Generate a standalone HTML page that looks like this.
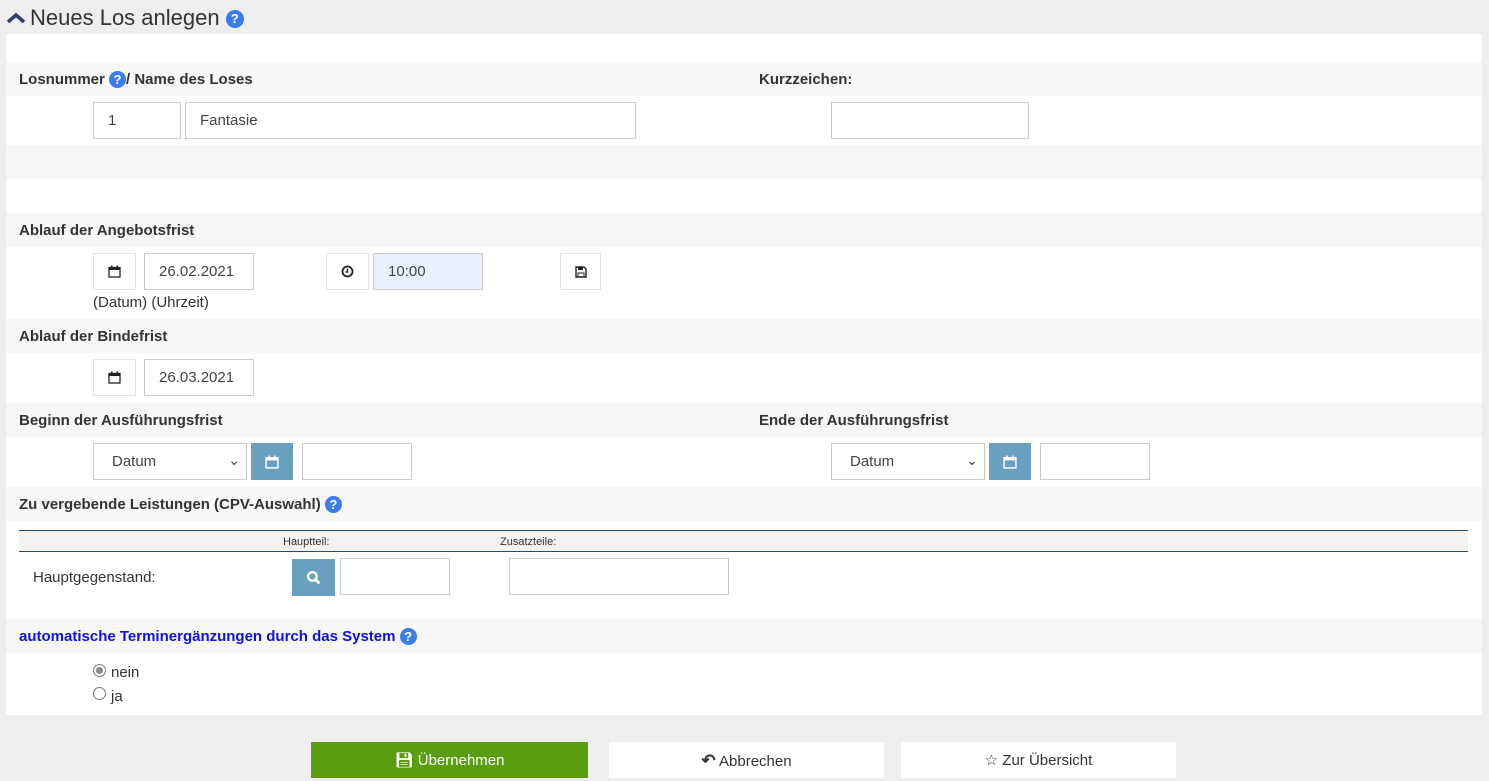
<!DOCTYPE html>
<html><head><meta charset="utf-8"><style>
body{margin:0;width:1489px;height:781px;background:#eee;font-family:"Liberation Sans",sans-serif;font-size:15px;color:#333;position:relative;overflow:hidden}
.a{position:absolute}
.row{position:absolute;left:6px;width:1476px;height:34px;background:#f7f7f7}
.lbl{position:absolute;font-weight:bold;font-size:15px;color:#333;line-height:18px}
.in{position:absolute;box-sizing:border-box;border:1px solid #ccc;background:#fff;height:37px;padding-left:14px;line-height:36px;font-size:15px;color:#444}
.ib{position:absolute;box-sizing:border-box;border:1px solid #e3e3e3;background:#fff;width:43px;height:37px;display:flex;align-items:center;justify-content:center}
.q{display:inline-block;width:17px;height:17px;border-radius:50%;background:#3a7bf0;color:#fff;font-weight:bold;font-size:13px;text-align:center;line-height:17px;vertical-align:top}
.sel{position:absolute;box-sizing:border-box;border:1px solid #ccc;background:#fff;height:37px;width:154px;padding-left:18px;line-height:36px;color:#444}
.bb{position:absolute;background:#6aa0bf;width:42px;height:37px;display:flex;align-items:center;justify-content:center}
.btn{position:absolute;top:742px;height:36px;line-height:37px;text-align:center;font-size:15px;background:#fff;color:#333}
</style></head><body>
<svg class="a" style="left:6px;top:11px" width="20" height="14" viewBox="0 0 20 14"><path d="M2 11 L10 4 L18 11" stroke="#2e3f66" stroke-width="3.5" fill="none"/></svg>
<div class="a" style="left:30px;top:6px;font-size:22px;color:#333;line-height:24px">Neues Los anlegen <span class="q" style="width:18px;height:18px;line-height:18px;vertical-align:middle">?</span></div>
<div class="a" style="left:6px;top:34px;width:1476px;height:681px;background:#fff"></div>
<div class="row" style="top:62px"></div>
<div class="row" style="top:145px"></div>
<div class="row" style="top:213px"></div>
<div class="row" style="top:319px"></div>
<div class="row" style="top:403px"></div>
<div class="row" style="top:487px"></div>
<div class="row" style="top:619px"></div>

<div class="lbl" style="left:19px;top:71px">Losnummer <span class="q">?</span>/ Name des Loses</div>
<div class="lbl" style="left:759px;top:71px">Kurzzeichen:</div>
<div class="in" style="left:93px;top:102px;width:88px">1</div>
<div class="in" style="left:185px;top:102px;width:451px">Fantasie</div>
<div class="in" style="left:831px;top:102px;width:198px"></div>

<div class="lbl" style="left:19px;top:222px">Ablauf der Angebotsfrist</div>
<div class="ib" style="left:93px;top:253px"><svg width="13" height="13" viewBox="0 0 13 13"><rect x="1" y="2.5" width="11" height="9.5" fill="none" stroke="#222" stroke-width="1.3"/><rect x="1" y="2.5" width="11" height="2.5" fill="#222"/><rect x="3" y="0.5" width="1.5" height="3" fill="#222"/><rect x="8.5" y="0.5" width="1.5" height="3" fill="#222"/></svg></div>
<div class="in" style="left:144px;top:253px;width:110px">26.02.2021</div>
<div class="ib" style="left:326px;top:253px"><svg width="13" height="13" viewBox="0 0 13 13"><circle cx="6.5" cy="6.5" r="5" fill="none" stroke="#222" stroke-width="1.8"/><path d="M6.5 3.5V7H4.5" stroke="#222" stroke-width="1.4" fill="none"/></svg></div>
<div class="in" style="left:373px;top:253px;width:110px;background:#e8f0fe">10:00</div>
<div class="ib" style="left:560px;top:253px;width:41px"><svg width="12" height="12" viewBox="0 0 12 12"><path d="M1 1H9L11 3V11H1Z" fill="none" stroke="#222" stroke-width="1.4"/><rect x="3" y="1" width="5" height="3" fill="#222"/><rect x="3" y="7" width="6" height="4" fill="none" stroke="#222"/></svg></div>
<div class="a" style="left:93px;top:294px">(Datum) (Uhrzeit)</div>

<div class="lbl" style="left:19px;top:328px">Ablauf der Bindefrist</div>
<div class="ib" style="left:93px;top:359px"><svg width="13" height="13" viewBox="0 0 13 13"><rect x="1" y="2.5" width="11" height="9.5" fill="none" stroke="#222" stroke-width="1.3"/><rect x="1" y="2.5" width="11" height="2.5" fill="#222"/><rect x="3" y="0.5" width="1.5" height="3" fill="#222"/><rect x="8.5" y="0.5" width="1.5" height="3" fill="#222"/></svg></div>
<div class="in" style="left:144px;top:359px;width:110px">26.03.2021</div>

<div class="lbl" style="left:19px;top:412px">Beginn der Ausführungsfrist</div>
<div class="lbl" style="left:759px;top:412px">Ende der Ausführungsfrist</div>
<div class="sel" style="left:93px;top:443px">Datum<span style="position:absolute;right:6px;top:-2px;font-size:14px">&#8964;</span></div>
<div class="bb" style="left:251px;top:443px"><svg width="14" height="14" viewBox="0 0 13 13"><rect x="1" y="2.5" width="11" height="9.5" fill="none" stroke="#fff" stroke-width="1.3"/><rect x="1" y="2.5" width="11" height="2.5" fill="#fff"/><rect x="3" y="0.5" width="1.5" height="3" fill="#fff"/><rect x="8.5" y="0.5" width="1.5" height="3" fill="#fff"/></svg></div>
<div class="in" style="left:302px;top:443px;width:110px"></div>
<div class="sel" style="left:831px;top:443px">Datum<span style="position:absolute;right:6px;top:-2px;font-size:14px">&#8964;</span></div>
<div class="bb" style="left:989px;top:443px"><svg width="14" height="14" viewBox="0 0 13 13"><rect x="1" y="2.5" width="11" height="9.5" fill="none" stroke="#fff" stroke-width="1.3"/><rect x="1" y="2.5" width="11" height="2.5" fill="#fff"/><rect x="3" y="0.5" width="1.5" height="3" fill="#fff"/><rect x="8.5" y="0.5" width="1.5" height="3" fill="#fff"/></svg></div>
<div class="in" style="left:1040px;top:443px;width:110px"></div>

<div class="lbl" style="left:19px;top:496px">Zu vergebende Leistungen (CPV-Auswahl) <span class="q">?</span></div>
<div class="a" style="left:19px;top:530px;width:1449px;height:20px;background:#f3f3f3;border-top:1px solid #1f4e6e;border-bottom:1px solid #1f4e6e"></div>
<div class="a" style="left:283px;top:536px;font-size:11px">Hauptteil:</div>
<div class="a" style="left:500px;top:536px;font-size:11px">Zusatzteile:</div>
<div class="a" style="left:33px;top:569px">Hauptgegenstand:</div>
<div class="bb" style="left:292px;top:559px;width:43px;height:37px"><svg width="15" height="15" viewBox="0 0 14 14"><circle cx="6" cy="6" r="4" fill="none" stroke="#fff" stroke-width="2.2"/><path d="M9 9L12.5 12.5" stroke="#fff" stroke-width="2.6"/></svg></div>
<div class="in" style="left:340px;top:558px;width:110px"></div>
<div class="in" style="left:509px;top:558px;width:220px"></div>

<div class="lbl" style="left:19px;top:628px;color:#1010e0">automatische Terminergänzungen durch das System <span class="q">?</span></div>
<div class="a" style="left:93px;top:664px;width:11px;height:11px;border:1px solid #777;border-radius:50%;background:#fff"><div style="margin:2px;width:7px;height:7px;border-radius:50%;background:#888"></div></div>
<div class="a" style="left:111px;top:664px">nein</div>
<div class="a" style="left:93px;top:687px;width:11px;height:11px;border:1px solid #777;border-radius:50%;background:#fff"></div>
<div class="a" style="left:111px;top:688px">ja</div>

<div class="btn" style="left:311px;width:277px;background:#5a9e10;color:#fff">&#128190;&#xFE0E; Übernehmen</div>
<div class="btn" style="left:609px;width:275px"><b style="font-size:17px">&#8630;</b> Abbrechen</div>
<div class="btn" style="left:901px;width:275px">&#9734; Zur Übersicht</div>
</body></html>
